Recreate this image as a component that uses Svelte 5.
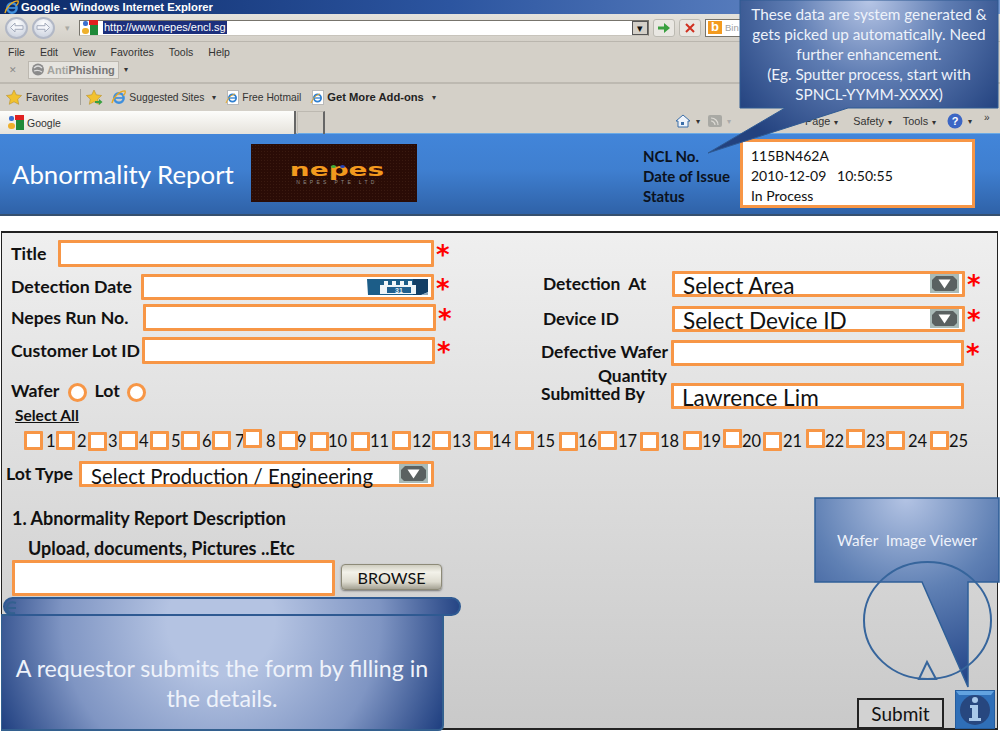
<script>
    // left edge, top edge and number position of each wafer checkbox
    const waferBoxes = [
        [25,432,47],[57,432,78],[89,433,109],[120,432,140],[151,432,172],
        [182,432,203],[213,432,236],[244,430,267],[280,432,298],[311,433,329],
        [352,433,371],[393,432,413],[433,432,453],[475,432,493],[516,432,537],
        [560,433,579],[599,432,619],[641,433,661],[684,432,703],[724,430,743],
        [764,433,784],[807,430,826],[847,430,867],[887,432,909],[931,432,950]
    ];
    const nextLeft = (i) => (i < 24 ? waferBoxes[i + 1][0] : 975);

    const menus = ["File", "Edit", "View", "Favorites", "Tools", "Help"];
    const commands = ["Safety", "Tools"];
</script>

{#snippet ieIcon(size)}
    <svg width={size} height={size} viewBox="0 0 16 16" class="icon">
        <circle cx="8.500" cy="8.500" r="5" fill="none" stroke="#3f8fdc" stroke-width="2.600"/>
        <path d="M4 8.500h9" stroke="#3f8fdc" stroke-width="1.800"/>
        <path d="M1 14C2 8 9 1 15 1c1 2-1 4-2 5" fill="none" stroke="#e8a820" stroke-width="1.400"/>
    </svg>
{/snippet}

{#snippet pageIe()}
    <svg width="14" height="15" viewBox="0 0 14 15" class="icon">
        <rect x="2.500" y=".5" width="11" height="14" fill="#fff" stroke="#b9b9b9"/>
        <circle cx="7.500" cy="8" r="3.600" fill="none" stroke="#2f7fd0" stroke-width="1.800"/>
        <path d="M4 8h7" stroke="#2f7fd0" stroke-width="1.300"/>
        <path d="M1 13c2-5 5-8 9-9" fill="none" stroke="#e8a820"/>
    </svg>
{/snippet}

{#snippet googleIcon()}
    <svg width="17" height="15" viewBox="0 0 17 15" class="icon">
        <rect x="1" y="1" width="5" height="5" rx="2" fill="#3b6fd0"/>
        <rect x="7" y="0" width="9" height="5" fill="#e02020"/>
        <rect x="8" y="5" width="8" height="10" fill="#1f8a3a"/>
        <rect x="0" y="8" width="7" height="6" rx="3" fill="#eeb02c"/>
    </svg>
{/snippet}

{#snippet star(extra)}
    <svg width="17" height="15" viewBox="0 0 17 15" class="icon">
        <path d="M8 0l2.300 4.800 5.300.7-3.900 3.600 1 5.200L8 11.800 3.300 14.300l1-5.200L.4 5.500l5.300-.7z" fill="#f2c22e" stroke="#b8902a" stroke-width=".6"/>
        {#if extra}<path d="M9 11h4V9l3.500 3-3.500 3v-2H9z" fill="#3aa040"/>{/if}
    </svg>
{/snippet}

{#snippet dropButton()}
    <svg width="29" height="19" viewBox="0 0 29 19" class="drop">
        <rect width="29" height="19" fill="#a9bab7"/>
        <path d="M6 2h17l4 4v8l-3 3H5l-3-3V6z" fill="#5a6161"/>
        <path d="M8.500 5.500h12l-6 9z" fill="#fff"/>
    </svg>
{/snippet}

<div class="page">
    <div class="chrome">
        <div class="titlebar">
            {@render ieIcon(15)}
            <span>Google - Windows Internet Explorer</span>
        </div>

        <div class="navbar">
            <div class="round">
                <svg width="15" height="11" viewBox="0 0 15 11"><path d="M6 1L1.500 5.500 6 10V7.300h8V3.700H6z" fill="#f4f6fa" stroke="#a4acbc"/></svg>
            </div>
            <div class="round second">
                <svg width="15" height="11" viewBox="0 0 15 11"><path d="M9 1l4.500 4.500L9 10V7.300H1V3.700h8z" fill="#f4f6fa" stroke="#a4acbc"/></svg>
            </div>
            <span class="nav-drop">▾</span>
            <div class="address">
                {@render googleIcon()}
                <span class="url">http://www.nepes/encl.sg</span>
                <span class="combo">▾</span>
            </div>
            <div class="tool-btn">
                <svg width="14" height="12" viewBox="0 0 14 12"><path d="M1 4.500h6V1l6 5-6 5V7.500H1z" fill="#3aa040"/></svg>
            </div>
            <div class="tool-btn">
                <svg width="12" height="12" viewBox="0 0 12 12"><path d="M2 2l8 8M10 2l-8 8" stroke="#d03020" stroke-width="2"/></svg>
            </div>
            <div class="search">
                <span class="bing">b</span>
                <span>Bin</span>
            </div>
        </div>

        <div class="menubar">
            {#each menus as menu}
                <span>{menu}</span>
            {/each}
        </div>

        <div class="antibar">
            <span class="close-x">✕</span>
            <div class="anti">
                <svg width="14" height="13" viewBox="0 0 14 13"><circle cx="7" cy="6.500" r="6" fill="#8b8b8b"/><path d="M3 5c3-3 6-2 8 0M3 8c3-1 5-1 8 1" fill="none" stroke="#ddd" stroke-width="1.200"/></svg>
                <b><i>Anti</i>Phishing</b>
            </div>
            <span class="mini-arrow">▾</span>
        </div>

        <div class="favbar">
            {@render star(false)}
            <span>Favorites</span>
            <span class="fav-sep"></span>
            {@render star(true)}
            <span class="fav-ie">{@render ieIcon(15)}</span>
            <span>Suggested Sites</span>
            <span class="mini-arrow">▾</span>
            <span class="fav-page">{@render pageIe()}</span>
            <span>Free Hotmail</span>
            <span class="fav-page">{@render pageIe()}</span>
            <b>Get More Add-ons</b>
            <span class="mini-arrow">▾</span>
        </div>

        <div class="tabbar">
            <div class="tab">
                {@render googleIcon()}
                <span>Google</span>
            </div>
            <div class="tab-new"></div>
            <div class="commands">
                <svg width="16" height="14" viewBox="0 0 16 14" class="icon"><path d="M8 1L1 7h2v6h10V7h2z" fill="#eef3fa" stroke="#3b6ea8"/><rect x="6" y="8" width="3" height="3" fill="#3b6ea8"/></svg>
                <span class="mini-arrow">▾</span>
                <svg width="14" height="12" viewBox="0 0 14 12" class="icon rss"><rect width="14" height="12" rx="2" fill="#a9a9a4"/><path d="M3 3c4 0 7 3 7 7M3 6c2 0 4 2 4 4" fill="none" stroke="#dedcd6" stroke-width="1.200"/></svg>
                <span class="mini-arrow faded">▾</span>
                <span class="cmd-gap"></span>
                <span class="cmd page-cmd">Page<i>▾</i></span>
                {#each commands as command}
                    <span class="cmd">{command}<i>▾</i></span>
                {/each}
                <svg width="16" height="16" viewBox="0 0 16 16" class="icon"><circle cx="8" cy="8" r="7.500" fill="#3c66c4"/><text x="8" y="12" text-anchor="middle" class="help">?</text></svg>
                <span class="mini-arrow">▾</span>
                <span class="more">»</span>
            </div>
        </div>
    </div>

    <header class="banner">
        <h1>Abnormality Report</h1>
        <div class="logo">
            <div class="logo-word">nepes</div>
            <span class="dot green"></span>
            <span class="dot blue"></span>
            <div class="logo-sub">NEPES PTE LTD</div>
        </div>
        <div class="ncl-labels">
            <span>NCL No.</span>
            <span>Date of Issue</span>
            <span>Status</span>
        </div>
        <div class="ncl-box">
            <span>115BN462A</span>
            <span>2010-12-09 &nbsp; 10:50:55</span>
            <span>In Process</span>
        </div>
    </header>

    <div class="spacer"></div>

    <main class="form">
        <div class="columns">
            <div class="col-left">
                <div class="row r-title">
                    <label class="l-title" for="f-title">Title</label>
                    <input id="f-title" class="field w-title">
                    <span class="req">*</span>
                </div>
                <div class="row r-date">
                    <label class="l-date" for="f-date">Detection Date</label>
                    <div class="field w-date">
                        <svg width="62" height="18" viewBox="0 0 62 18" class="cal">
                            <path d="M0 1h61v13l-7 3H1z" fill="#1c5d88"/>
                            <path d="M46 1h15v13l-7 3h-8z" fill="#123e66"/>
                            <path d="M61 14v3h-7z" fill="#8fa9bd"/>
                            <rect x="13" y="7" width="36" height="9" fill="#eef4f8"/>
                            <rect x="20" y="9" width="24" height="6" fill="#1f5f8f"/>
                            <text x="32" y="14.500" text-anchor="middle" class="cal-num">31</text>
                            <path d="M17 3h4v4h-4zM25 3h4v4h-4zM33 3h4v4h-4zM41 3h4v4h-4z" fill="#f2f6f9"/>
                        </svg>
                    </div>
                    <span class="req">*</span>
                </div>
                <div class="row r-run">
                    <label class="l-run" for="f-run">Nepes Run No.</label>
                    <input id="f-run" class="field w-run">
                    <span class="req">*</span>
                </div>
                <div class="row r-cust">
                    <label class="l-cust" for="f-cust">Customer Lot ID</label>
                    <input id="f-cust" class="field w-cust">
                    <span class="req">*</span>
                </div>
                <div class="row r-wafer">
                    <span class="lab">Wafer</span>
                    <span class="radio"></span>
                    <span class="lab">Lot</span>
                    <span class="radio"></span>
                </div>
                <a class="select-all" href="#all">Select All</a>
            </div>

            <div class="col-right">
                <div class="row r-at">
                    <span class="lab rl-at">Detection &nbsp;At</span>
                    <div class="field select w-right"><span>Select Area</span>{@render dropButton()}</div>
                    <span class="req">*</span>
                </div>
                <div class="row r-dev">
                    <span class="lab rl-dev">Device ID</span>
                    <div class="field select w-right"><span>Select Device ID</span>{@render dropButton()}</div>
                    <span class="req">*</span>
                </div>
                <div class="row r-def">
                    <span class="lab rl-def">Defective Wafer<em>Quantity</em></span>
                    <div class="field w-right"></div>
                    <span class="req">*</span>
                </div>
                <div class="row r-sub">
                    <span class="lab rl-sub">Submitted By</span>
                    <div class="field select w-right"><span>Lawrence Lim</span></div>
                </div>
            </div>
        </div>

        <div class="wafers">
            {#each waferBoxes as box, i}
                <div class="wafer" style="width: {nextLeft(i) - box[0]}px">
                    <span class="check" style="margin-top: {box[1] - 430}px"></span>
                    <span class="num" style="left: {box[2] - box[0]}px">{i + 1}</span>
                </div>
            {/each}
        </div>

        <div class="lot-row">
            <span class="lab">Lot Type</span>
            <div class="field select lot-select"><span>Select Production / Engineering</span>{@render dropButton()}</div>
        </div>

        <h2>1. Abnormality Report Description</h2>
        <h3>Upload, documents, Pictures ..Etc</h3>

        <div class="upload-row">
            <input class="field upload" aria-label="Upload">
            <button class="browse">BROWSE</button>
        </div>
    </main>

    <!-- slide callouts sitting over the form -->
    <div class="callout top-note">
        <svg width="292" height="160" viewBox="0 0 292 160" class="shape">
            <defs>
                <radialGradient id="g1" gradientUnits="userSpaceOnUse" cx="161" cy="0" r="170">
                    <stop offset="0" stop-color="#b7c6e6"/>
                    <stop offset=".45" stop-color="#5f7db3"/>
                    <stop offset="1" stop-color="#23427f"/>
                </radialGradient>
            </defs>
            <path d="M32 0H290V108H140L0 153 77 108H32z" fill="url(#g1)" stroke="#2f5a92"/>
        </svg>
        <p>These data are system generated &amp;<br>gets picked up automatically. Need<br>further enhancement.<br>(Eg. Sputter process, start with<br>SPNCL-YYMM-XXXX)</p>
    </div>

    <div class="callout wafer-note">
        <svg width="186" height="192" viewBox="0 0 186 192" class="shape">
            <defs>
                <radialGradient id="g2" gradientUnits="userSpaceOnUse" cx="92" cy="0" r="190">
                    <stop offset="0" stop-color="#b4c4e4"/>
                    <stop offset=".5" stop-color="#5f80b4"/>
                    <stop offset="1" stop-color="#25478a"/>
                </radialGradient>
            </defs>
            <path d="M1 1H185V85H154V190L108 85H1z" fill="url(#g2)" stroke="#2f5f98" stroke-width="1.500"/>
            <ellipse cx="113.500" cy="123.500" rx="63.500" ry="58.500" fill="none" stroke="#36659c" stroke-width="2"/>
            <path d="M105 182l8-17 9 17z" fill="none" stroke="#36659c" stroke-width="2"/>
        </svg>
        <p>Wafer &nbsp;Image Viewer</p>
    </div>

    <div class="callout scroll-note">
        <svg width="460" height="134" viewBox="0 0 460 134" class="shape">
            <defs>
                <radialGradient id="g3" gradientUnits="userSpaceOnUse" cx="220" cy="25" r="245">
                    <stop offset=".22" stop-color="#b4c3e2"/>
                    <stop offset=".65" stop-color="#7f95c3"/>
                    <stop offset="1" stop-color="#1f3f80"/>
                </radialGradient>
            </defs>
            <path d="M0 18H442V128q0 5-5 5H0z" fill="url(#g3)" stroke="#33608f" stroke-width="2"/>
            <rect x="3" y="1" width="456" height="17" rx="8.500" fill="url(#g3)" stroke="#2f5a92" stroke-width="2"/>
            <path d="M15 6c-5-2-9 0-9 5s4 6 8 5M6 11h9" fill="none" stroke="#33608f" stroke-width="2"/>
        </svg>
        <p>A requestor submits the form by filling in<br>the details.</p>
    </div>

    <button class="submit">Submit</button>
    <div class="info">
        <svg width="40" height="39" viewBox="0 0 40 39">
            <rect x=".5" y=".5" width="39" height="38" fill="#2f6fb8" stroke="#245c9e"/>
            <path d="M1 1h38l-3 4H4z" fill="#62a3e0"/>
            <circle cx="20" cy="20" r="15" fill="#27477f"/>
            <circle cx="20" cy="10" r="3" fill="#a8c8ea"/>
            <path d="M15 15h8v13h3v3H14v-3h3V18h-2z" fill="#a8c8ea"/>
        </svg>
    </div>
</div>

<style>
    :global(body) {
        margin: 0;
        background: #fff;
    }

    .page {
        position: relative;
        width: 1000px;
        height: 748px;
        overflow: hidden;
        background: #fff;
        font-family: Lato, "Liberation Sans", sans-serif;
        color: #111;
    }

    .icon {
        flex: none;
    }

    /* browser chrome */
    .chrome {
        height: 133px;
        background: #d4d0c8;
        font-family: "Liberation Sans", Arial, sans-serif;
        font-size: 10.500px;
        color: #333;
    }

    .titlebar {
        display: flex;
        align-items: center;
        gap: 2px;
        height: 14px;
        padding-left: 4px;
        background: linear-gradient(90deg, #0c2a68, #2c55a0 45%, #7a9cd4);
        color: #fff;
        font-weight: bold;
        font-size: 11.300px;
    }

    .navbar {
        display: flex;
        align-items: center;
        height: 27px;
        padding-left: 5px;
        border-bottom: 1px solid #bab6ae;
        background: linear-gradient(#e4e2dc, #d4d0c8);
    }

    .round {
        display: flex;
        align-items: center;
        justify-content: center;
        flex: none;
        width: 23px;
        height: 22px;
        box-sizing: border-box;
        border: 2px solid #b2b8c6;
        border-radius: 50%;
        background: radial-gradient(circle at 50% 25%, #fff, #c3cbda);
    }

    .round.second {
        margin-left: 4px;
    }

    .nav-drop {
        width: 24px;
        flex: none;
        text-align: center;
        color: #a9a9a3;
        font-size: 9px;
    }

    .address {
        display: flex;
        align-items: center;
        box-sizing: border-box;
        width: 570px;
        height: 16px;
        padding-left: 2px;
        border: 1px solid #77746c;
        border-bottom-color: #c8c4bc;
        background: #fff;
    }

    .url {
        margin-left: 4px;
        padding: 0 1px;
        background: #1c2f7c;
        color: #fff;
        font-size: 11px;
        line-height: 13px;
    }

    .combo {
        margin-left: auto;
        width: 16px;
        height: 14px;
        background: #d4d0c8;
        border: 1px solid #555;
        box-sizing: border-box;
        color: #111;
        font-size: 11px;
        line-height: 12px;
        text-align: center;
    }

    .tool-btn {
        display: flex;
        align-items: center;
        justify-content: center;
        width: 20px;
        height: 16px;
        margin-left: 4px;
        border: 1px solid #bcbab2;
        border-radius: 3px;
        background: #e9e7e2;
    }

    .search {
        display: flex;
        align-items: center;
        gap: 3px;
        width: 90px;
        height: 16px;
        margin-left: 4px;
        padding-left: 2px;
        border: 1px solid #77746c;
        background: #fff;
        color: #a0a0a0;
        font-size: 9.500px;
    }

    .bing {
        width: 14px;
        height: 13px;
        background: #f39a1e;
        color: #fff;
        font-weight: bold;
        font-size: 13px;
        line-height: 12px;
        text-align: center;
    }

    .menubar {
        display: flex;
        gap: 15px;
        align-items: center;
        height: 20px;
        padding-left: 8px;
    }

    .antibar {
        display: flex;
        align-items: center;
        height: 22px;
        padding-left: 9px;
        border-bottom: 2px solid #bdb9b1;
        box-sizing: border-box;
        padding-bottom: 5px;
    }

    .close-x {
        margin-right: 11px;
        color: #8a8a88;
        font-size: 9px;
    }

    .anti {
        display: flex;
        align-items: center;
        gap: 2px;
        width: 87px;
        height: 16px;
        padding-left: 2px;
        border: 1px solid #bcb8b0;
        background: #e6e4df;
        color: #777;
        font-size: 11px;
    }

    .anti i {
        font-style: normal;
        color: #a4a4a0;
    }

    .mini-arrow {
        margin-left: 5px;
        color: #333;
        font-size: 8px;
    }

    .mini-arrow.faded {
        color: #aaa;
    }

    .favbar {
        display: flex;
        align-items: center;
        height: 27px;
        padding-left: 6px;
        gap: 3px;
        box-sizing: border-box;
        padding-bottom: 1px;
        font-size: 10.300px;
    }

    .fav-sep {
        width: 1px;
        height: 16px;
        margin: 0 2px 0 9px;
        background: #a5a29b;
    }

    .fav-ie {
        display: flex;
        margin-left: 5px;
    }

    .fav-page {
        display: flex;
        margin-left: 6px;
    }

    .favbar b {
        color: #222;
        font-size: 11.200px;
    }

    .tabbar {
        display: flex;
        height: 23px;
    }

    .tab {
        display: flex;
        align-items: center;
        gap: 2px;
        box-sizing: border-box;
        width: 296px;
        padding-left: 8px;
        border-right: 2px solid #666;
        background: linear-gradient(#fdfdfb, #e6e3dc);
    }

    .tab-new {
        width: 28px;
        margin-left: 1px;
        box-sizing: border-box;
        border: 1px solid #bdb9b1;
        border-right: 2px solid #666;
        border-bottom: 0;
    }

    .commands {
        display: flex;
        align-items: center;
        flex: 1;
        padding-left: 350px;
        padding-bottom: 3px;
        font-size: 10.800px;
    }

    .rss {
        margin-left: 8px;
    }

    .cmd-gap {
        width: 74px;
    }

    .cmd {
        margin-right: 11px;
    }

    .page-cmd {
        margin-right: 15px;
    }

    .cmd i {
        margin-left: 4px;
        font-style: normal;
        font-size: 8px;
    }

    .help {
        fill: #fff;
        font: bold 11px "Liberation Sans", sans-serif;
    }

    .more {
        margin-left: 12px;
        margin-top: -8px;
        font-size: 10px;
    }

    /* blue report banner */
    .banner {
        display: flex;
        align-items: flex-start;
        box-sizing: border-box;
        height: 83px;
        padding-left: 12px;
        border-top: 1px solid #6aaae6;
        border-bottom: 2px solid #36506f;
        background: linear-gradient(#4285d9, #3f7fd0 45%, #2f62a8);
    }

    h1 {
        width: 239px;
        margin: 24px 0 0;
        color: #fff;
        font-size: 25.800px;
        line-height: 32px;
        font-weight: 400;
        white-space: nowrap;
    }

    .logo {
        position: relative;
        width: 166px;
        height: 58px;
        margin-top: 10px;
        box-sizing: border-box;
        padding-top: 17px;
        background: #2a0c06 radial-gradient(#3a1a10 35%, transparent 40%) 0 0 / 3px 3px;
        text-align: center;
        overflow: hidden;
    }

    .logo-word {
        color: #f39a1e;
        font: bold 18px/18px "DejaVu Sans", sans-serif;
        transform: translateX(3px) scaleX(1.550);
    }

    .dot {
        position: absolute;
        top: 21px;
        width: 5px;
        height: 3px;
        border-radius: 50%;
    }

    .dot.green {
        left: 80px;
        background: #3fae3a;
    }

    .dot.blue {
        left: 89px;
        background: #2544b8;
    }

    .logo-sub {
        color: #8f8a84;
        font: 5px/7px "Liberation Sans", sans-serif;
        letter-spacing: 3.300px;
        transform: translateX(3px);
    }

    .ncl-labels {
        display: flex;
        flex-direction: column;
        width: 97px;
        margin: 12px 0 0 226px;
        font-size: 15px;
        font-weight: 700;
        line-height: 20px;
        color: #0b1220;
        white-space: nowrap;
    }

    .ncl-box {
        display: flex;
        flex-direction: column;
        box-sizing: border-box;
        width: 235px;
        height: 69px;
        margin-top: 5px;
        padding: 4px 0 0 8px;
        border: 3px solid #f79646;
        background: #fff;
        font-size: 14px;
        line-height: 20px;
    }

    .spacer {
        height: 15px;
    }

    /* form */
    .form {
        box-sizing: border-box;
        width: 997px;
        height: 499px;
        margin-left: 1px;
        border: 1px solid #222;
        border-top-width: 2px;
        border-bottom-width: 2px;
        background: linear-gradient(#efefef, #c9c9c9);
    }

    .columns {
        display: flex;
    }

    .col-left {
        width: 530px;
        flex: none;
    }

    .row {
        display: flex;
        align-items: center;
    }

    label, .lab {
        font-weight: 700;
        font-size: 17.700px;
        line-height: 22px;
        white-space: nowrap;
    }

    .field {
        box-sizing: border-box;
        display: block;
        padding: 0;
        border: 3px solid #f79646;
        border-radius: 1px;
        background: #fff;
        outline: none;
    }

    .req {
        margin: 2px 0 0 2px;
        height: 20px;
        color: #f00;
        font: bold 26px/26px "DejaVu Sans", sans-serif;
        align-self: flex-start;
    }

    .col-right .req {
        margin-top: 1px;
    }

    .r-title { margin-top: 7px; padding-left: 9px; }
    .l-title { width: 47px; }
    .w-title { width: 376px; height: 27px; }

    .r-date { margin-top: 7px; padding-left: 9px; }
    .l-date { width: 130px; }
    .w-date { position: relative; width: 293px; height: 26px; }
    .cal { position: absolute; right: 2px; top: 1px; }
    .cal-num { fill: #e4f0f8; font: bold 7px "Liberation Sans", sans-serif; }

    .r-run { margin-top: 4px; padding-left: 9px; }
    .l-run { width: 132px; }
    .w-run { width: 293px; height: 27px; }

    .r-cust { margin-top: 6px; padding-left: 9px; }
    .l-cust { width: 131px; }
    .w-cust { width: 293px; height: 27px; }

    .r-wafer {
        margin-top: 16px;
        padding-left: 9px;
    }

    .radio {
        box-sizing: border-box;
        width: 19px;
        height: 19px;
        margin: 2px 7px 0 9px;
        border: 3px solid #f79646;
        border-radius: 50%;
        background: #fff;
    }

    .radio:last-child {
        margin-left: 7px;
    }

    .select-all {
        display: block;
        margin: 5px 0 0 13px;
        color: #111;
        font-size: 15.500px;
        line-height: 16px;
        font-weight: 700;
        text-decoration: underline;
    }

    .col-right {
        flex: 1;
        min-width: 0;
        padding-top: 38px;
    }

    .col-right .row {
        padding-left: 11px;
    }

    .col-right .lab {
        flex: none;
        font-size: 17.400px;
        position: relative;
    }

    .w-right { width: 293px; height: 26px; }

    .rl-at, .rl-dev { width: 129px; }
    .rl-def, .rl-sub { width: 130px; }

    .r-dev { margin-top: 9px; }
    .r-def { margin-top: 8px; margin-left: -2px; }
    .r-sub { margin-top: 17px; margin-left: -2px; }

    .r-def .lab { margin-top: -2px; }
    .r-sub .lab { margin-top: -4px; }

    .rl-def em {
        position: absolute;
        right: 4px;
        top: 24px;
        font-style: normal;
    }

    .select {
        display: flex;
        align-items: center;
        justify-content: space-between;
        padding-left: 8px;
        font-size: 22.600px;
        line-height: 22px;
    }

    .select span {
        margin-top: 4px;
        white-space: nowrap;
    }

    .drop {
        flex: none;
        margin-right: 3px;
        margin-top: -2px;
    }

    .wafers {
        display: flex;
        padding-left: 22px;
        margin-top: 6px;
        height: 24px;
    }

    .wafer {
        position: relative;
        flex: none;
    }

    .check {
        display: block;
        box-sizing: border-box;
        width: 19px;
        height: 19px;
        border: 3px solid #f79646;
        border-radius: 1px;
        background: #fff;
    }

    .num {
        position: absolute;
        top: 2px;
        font-size: 16.500px;
        line-height: 20px;
    }

    .lot-row {
        display: flex;
        align-items: center;
        margin-top: 8px;
        padding-left: 4px;
    }

    .lot-row .lab {
        width: 73px;
    }

    .lot-select {
        width: 355px;
        height: 26px;
        padding-left: 9px;
        font-size: 20.300px;
    }

    h2, h3 {
        font-weight: 700;
        font-size: 18px;
        line-height: 18px;
        margin: 0;
        white-space: nowrap;
    }

    h2 {
        margin: 22px 0 0 10px;
    }

    h3 {
        margin: 12px 0 3px 26px;
    }

    .upload-row {
        display: flex;
        align-items: flex-start;
        gap: 6px;
        padding-left: 10px;
    }

    .upload {
        width: 323px;
        height: 36px;
    }

    .browse {
        width: 101px;
        height: 26px;
        margin-top: 4px;
        border: 1px solid #8d8a78;
        border-radius: 4px;
        background: linear-gradient(#cfcdc0, #f3f2ea 30%, #dedcd0 70%, #a5a294);
        box-shadow: 0 1px 2px #777;
        color: #111;
        font: 16.200px Lato, sans-serif;
        padding: 0;
    }

    /* slide callouts */
    .callout {
        position: absolute;
    }

    .shape {
        display: block;
    }

    .callout p {
        position: absolute;
        margin: 0;
        color: #eef2fa;
        text-align: center;
        white-space: nowrap;
    }

    .top-note {
        left: 708px;
        top: 0;
    }

    .top-note p {
        left: 32px;
        top: 4px;
        width: 258px;
        font-size: 15.300px;
        line-height: 20px;
    }

    .wafer-note {
        left: 814px;
        top: 497px;
    }

    .wafer-note p {
        left: 0;
        top: 34px;
        width: 186px;
        font-size: 15.300px;
    }

    .scroll-note {
        left: 1px;
        top: 597px;
    }

    .scroll-note p {
        left: 5px;
        top: 56px;
        width: 432px;
        font-size: 23.200px;
        line-height: 30px;
    }

    .submit {
        position: absolute;
        left: 857px;
        top: 698px;
        width: 87px;
        height: 31px;
        border: 2px solid #222;
        background: #d2d2d2;
        color: #111;
        font: 19px Lato, sans-serif;
        padding: 0;
    }

    .info {
        position: absolute;
        left: 955px;
        top: 690px;
        height: 39px;
    }
</style>
